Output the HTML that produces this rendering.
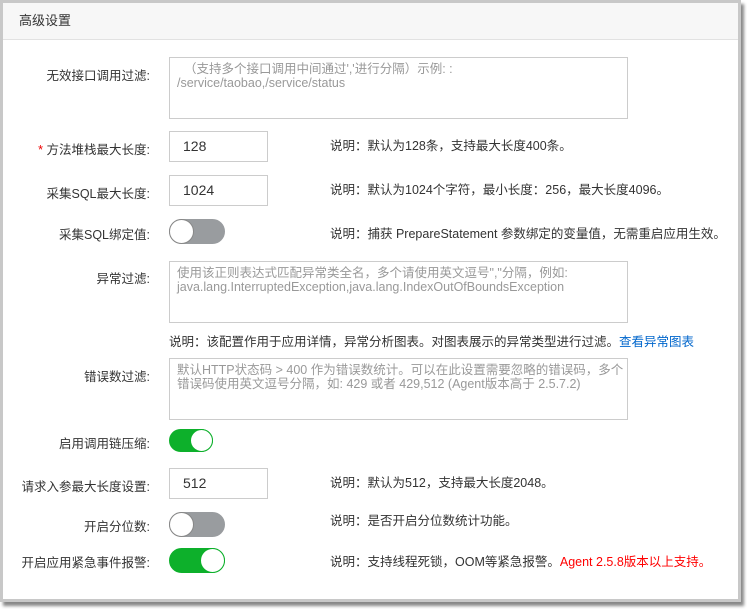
<!DOCTYPE html><html><head><meta charset="utf-8"><style>
body{margin:0;width:747px;height:609px;background:#fff;font-family:"Liberation Sans","Noto Sans CJK SC",sans-serif;font-size:12.5px;color:#333;position:relative;overflow:hidden}
.frame{position:absolute;left:0;top:0;width:741px;height:602px;background:#c8c8c8;box-shadow:3px 4px 3px #888}
.panel{position:absolute;left:3px;top:3px;width:735px;height:596px;background:#fff}
.hd{height:36px;background:#f7f7f7;border-bottom:1px solid #e2e2e2;line-height:36px;padding-left:16px;font-size:13px;color:#333}
.lb{position:absolute;right:597px;text-align:right;white-space:nowrap;color:#333}
.ta{position:absolute;left:169px;border:1px solid #ccc;color:#999;font-size:12.5px;line-height:14px;padding:4px 7px;box-sizing:border-box;width:459px;height:62px;white-space:nowrap;overflow:hidden}
.in{position:absolute;left:169px;width:99px;height:31px;border:1px solid #ccc;box-sizing:border-box;line-height:29px;padding-left:13px;font-size:14px;color:#333}
.nt{position:absolute;left:330px;white-space:nowrap;color:#333}
.tg{position:absolute;left:169px;width:56px;height:25px;border-radius:13px;box-sizing:border-box}
.tg i{position:absolute;top:0;width:25px;height:25px;border-radius:50%;background:#fff;box-sizing:border-box}
.off{background:#999c9f;border:1px solid #999c9f}.off i{left:-1px;top:-1px;border:1px solid #888}
.on{background:#0db02b;border:1px solid #0db02b}.on i{right:-1px;top:-1px;border:1px solid #0db02b}
</style></head><body>
<div class="frame"></div>
<div class="panel"><div class="hd">高级设置</div></div>
<div class="lb" style="top:65px">无效接口调用过滤:</div>
<div class="ta" style="top:57px">&nbsp;&nbsp;（支持多个接口调用中间通过','进行分隔）示例: :<br>/service/taobao,/service/status</div>
<div class="lb" style="top:139px"><span style="color:#e00">*</span> 方法堆栈最大长度:</div>
<div class="in" style="top:131px">128</div>
<div class="nt" style="top:135px">说明：默认为128条，支持最大长度400条。</div>
<div class="lb" style="top:183px">采集SQL最大长度:</div>
<div class="in" style="top:175px">1024</div>
<div class="nt" style="top:179px">说明：默认为1024个字符，最小长度：256，最大长度4096。</div>
<div class="lb" style="top:224px">采集SQL绑定值:</div>
<div class="tg off" style="top:219px"><i></i></div>
<div class="nt" style="top:223px">说明：捕获 PrepareStatement 参数绑定的变量值，无需重启应用生效。</div>
<div class="lb" style="top:268px">异常过滤:</div>
<div class="ta" style="top:261px">使用该正则表达式匹配异常类全名，多个请使用英文逗号","分隔，例如:<br>java.lang.InterruptedException,java.lang.IndexOutOfBoundsException</div>
<div class="nt" style="top:331px;left:169px">说明：该配置作用于应用详情，异常分析图表。对图表展示的异常类型进行过滤。<span style="color:#06c">查看异常图表</span></div>
<div class="lb" style="top:366px">错误数过滤:</div>
<div class="ta" style="top:358px">默认HTTP状态码 &gt; 400 作为错误数统计。可以在此设置需要忽略的错误码，多个<br>错误码使用英文逗号分隔，如: 429 或者 429,512 (Agent版本高于 2.5.7.2)</div>
<div class="lb" style="top:433px">启用调用链压缩:</div>
<div class="tg on" style="top:429px;width:44px;height:23px"><i style="width:23px;height:23px"></i></div>
<div class="lb" style="top:476px">请求入参最大长度设置:</div>
<div class="in" style="top:468px">512</div>
<div class="nt" style="top:472px">说明：默认为512，支持最大长度2048。</div>
<div class="lb" style="top:516px">开启分位数:</div>
<div class="tg off" style="top:512px"><i></i></div>
<div class="nt" style="top:510px">说明：是否开启分位数统计功能。</div>
<div class="lb" style="top:552px">开启应用紧急事件报警:</div>
<div class="tg on" style="top:548px"><i></i></div>
<div class="nt" style="top:551px">说明：支持线程死锁，OOM等紧急报警。<span style="color:#f00">Agent 2.5.8版本以上支持。</span></div>
</body></html>
